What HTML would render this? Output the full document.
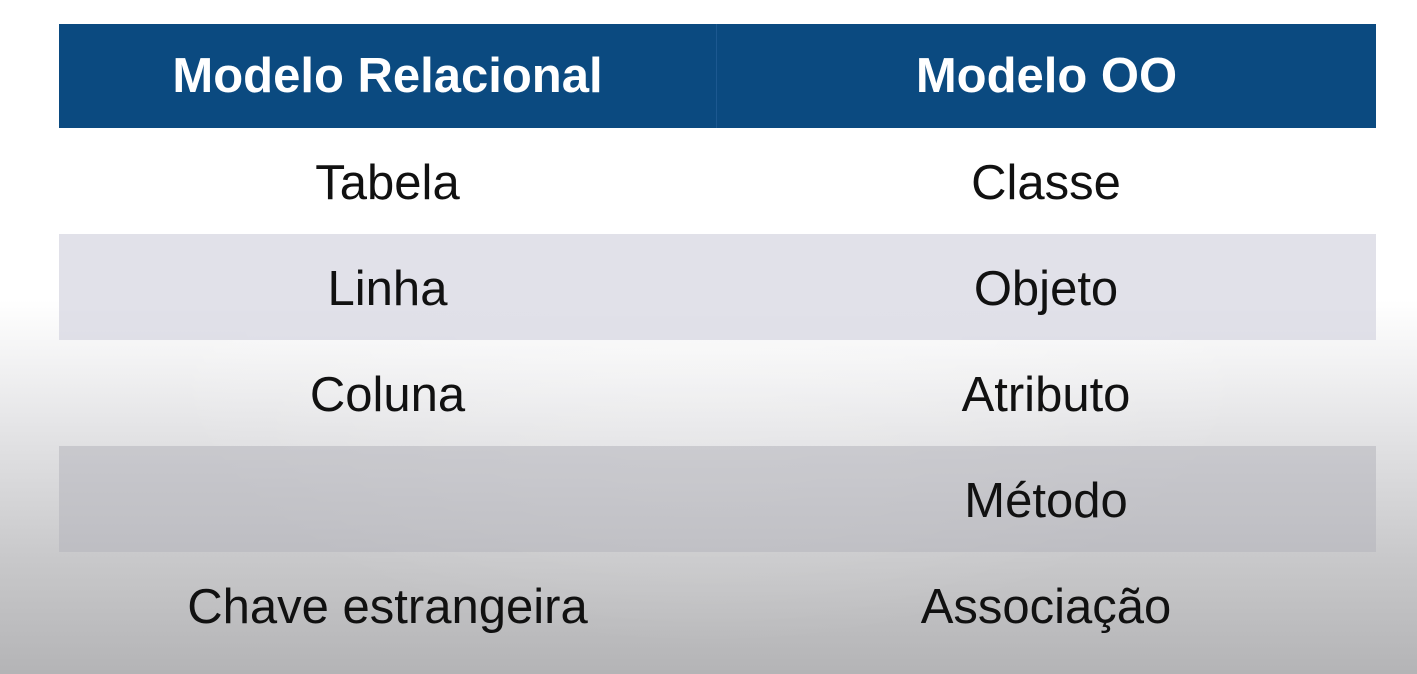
<!DOCTYPE html>
<html><head><style>
html,body{margin:0;padding:0}
body{width:1417px;height:674px;overflow:hidden;position:relative;
background:linear-gradient(180deg,#ffffff 0px,#ffffff 300px,#e6e6e8 420px,#c8c8ca 560px,#b4b4b6 674px);
font-family:"Liberation Sans",Arial,sans-serif}
.vig{position:absolute;inset:0;background:radial-gradient(ellipse 60% 80% at 50% 40%,rgba(255,255,255,0.35),rgba(255,255,255,0) 70%)}
.t{position:absolute;left:59px;top:24px;width:1317px}
.r{display:flex;height:106px;align-items:center}
.r div{flex:0 0 657px;text-align:center;font-size:49px;color:#111;padding-top:4px}
.r div+div{flex:1}
.h{background:#0b4a80;height:104px}
.h div{color:#fff;font-weight:bold;font-size:49px;padding-top:0}
.h div:first-child{border-right:1px solid #1c5890;height:104px;line-height:104px}
.g1{background:rgba(215,215,225,0.75)}
.g2{background:rgba(180,180,188,0.55)}
</style></head><body>
<div class="vig"></div>
<div class="t">
<div class="r h"><div>Modelo Relacional</div><div>Modelo OO</div></div>
<div class="r"><div>Tabela</div><div>Classe</div></div>
<div class="r g1"><div>Linha</div><div>Objeto</div></div>
<div class="r"><div>Coluna</div><div>Atributo</div></div>
<div class="r g2"><div></div><div>Método</div></div>
<div class="r"><div>Chave estrangeira</div><div>Associação</div></div>
</div>
</body></html>
